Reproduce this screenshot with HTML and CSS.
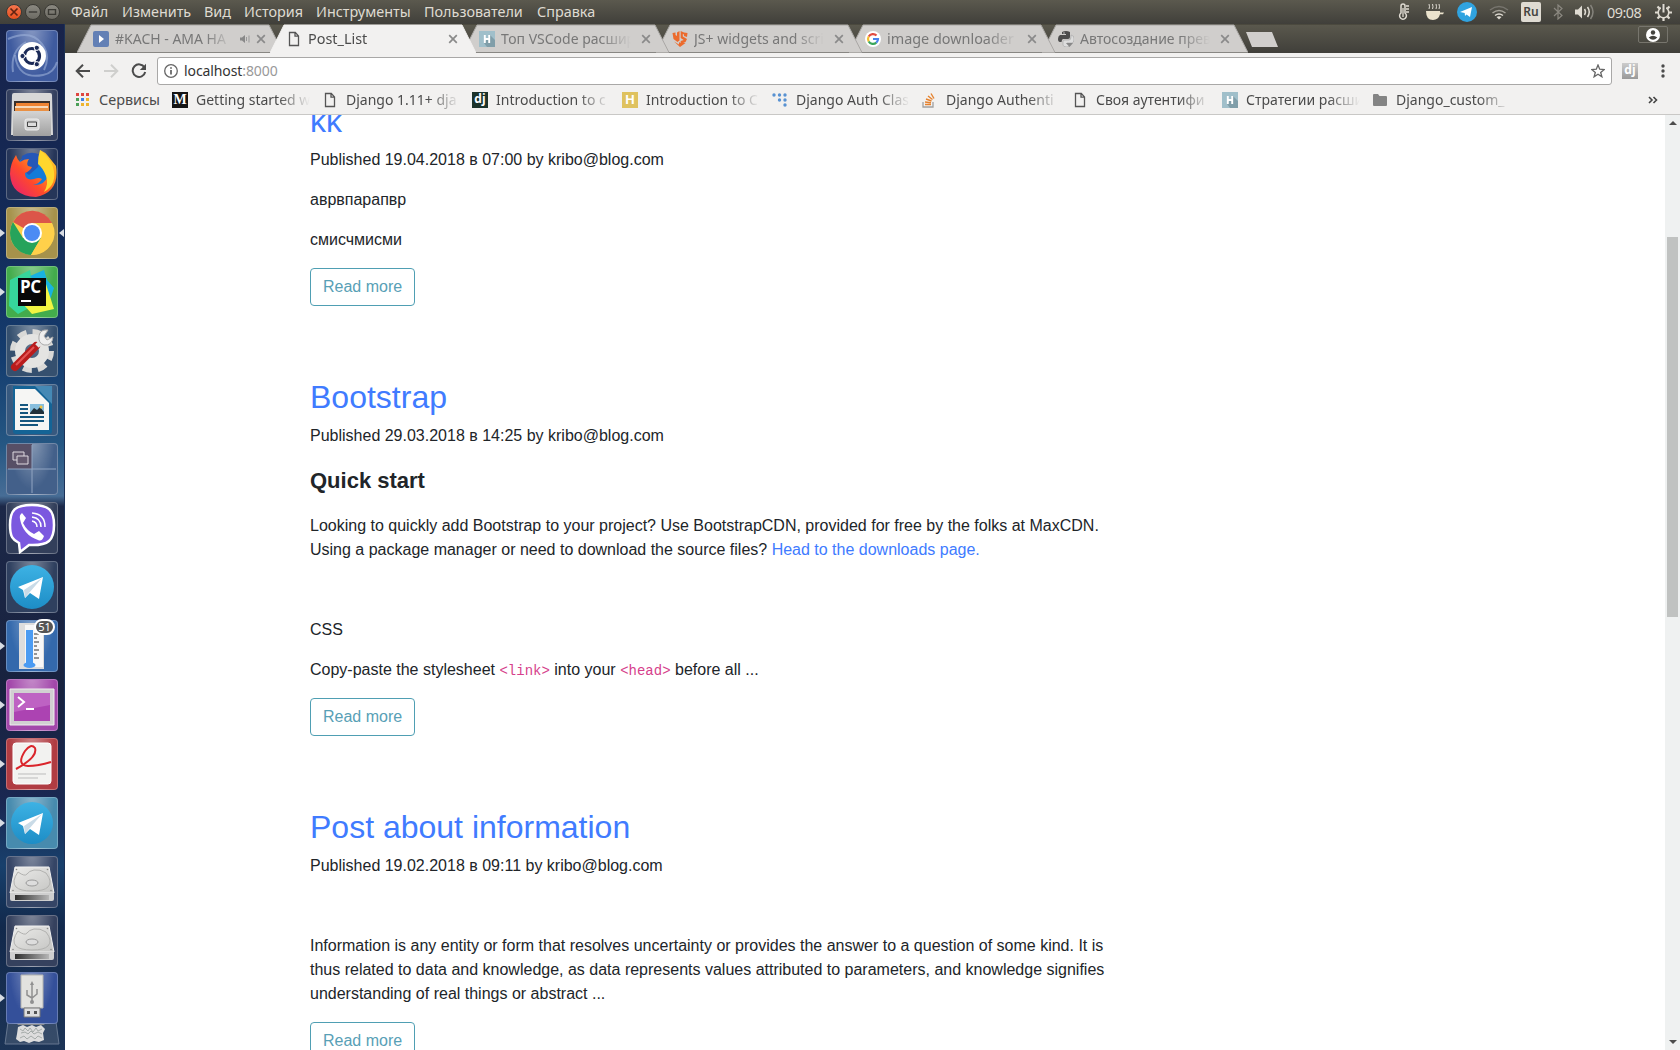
FILE: index.html
```html
<!DOCTYPE html>
<html lang="ru">
<head>
<meta charset="utf-8">
<title>Post_List</title>
<link rel="stylesheet" href="styles.css">
</head>
<body>
<svg class="defs" width="0" height="0">
  <defs>
    <linearGradient id="metal" x1="0" y1="0" x2="0" y2="1"><stop offset="0" stop-color="#d4d4d4"/><stop offset="1" stop-color="#a0a0a0"/></linearGradient>
    <linearGradient id="slab" x1="0" y1="0" x2="1" y2="1"><stop offset="0" stop-color="#ededeb"/><stop offset="1" stop-color="#c4c4c2"/></linearGradient>
    <linearGradient id="slot" x1="0" y1="0" x2="1" y2="0"><stop offset="0" stop-color="#2e2e2e"/><stop offset="1" stop-color="#b5b5b5"/></linearGradient>
    <linearGradient id="tgBlue" x1="0" y1="0" x2="0" y2="1"><stop offset="0" stop-color="#3db2e4"/><stop offset="1" stop-color="#1d8dc6"/></linearGradient>
    <linearGradient id="fox" x1="0" y1="1" x2="1" y2="0"><stop offset="0" stop-color="#e3197c"/><stop offset=".4" stop-color="#ff4a2b"/><stop offset=".7" stop-color="#ff9a1e"/><stop offset="1" stop-color="#ffee3a"/></linearGradient>
    <symbol id="page" viewBox="0 0 16 16"><path d="M3.500 1.500h5.800l3.200 3.400v9.600h-9zM9 1.500v3.700h3.500" fill="none" stroke="#555" stroke-width="1.300"/></symbol>
    <symbol id="habr" viewBox="0 0 16 16"><path d="M0 0h16v16H0z" fill="#a0bfca"/><path d="M11 4l5 5v7H8l-3-4z" fill="#809ea9"/><path d="M5.800 4v8M10.200 4v8M5.800 8h4.400" stroke="#fff" stroke-width="1.900"/></symbol>
    <symbol id="close" viewBox="0 0 10 10"><path d="M1.200 1.200l7.600 7.600M8.800 1.200L1.200 8.800" stroke="#8a8a8a" stroke-width="1.700"/></symbol>
    <symbol id="disk" viewBox="0 0 52 52"><path d="M9 11h34l5 26H4z" fill="url(#slab)" stroke="#f1f1f1"/><path d="M4 37h44v6q0 2-2 2H6q-2 0-2-2z" fill="#cfcfcf"/><path d="M9 39h34v5H9z" fill="url(#slot)"/><path d="M12 16q-7 10-2 15 4 4 16 4t16-4q5-5-2-14-6-4-12-3-5 1-7 4t-9-2z" fill="none" stroke="#b2b2b0"/><ellipse cx="26" cy="27" rx="6" ry="3" fill="#ddd" stroke="#999"/><g fill="#8a8a88"><circle cx="10.500" cy="13.500" r=".8"/><circle cx="41.500" cy="13.500" r=".8"/><circle cx="7" cy="34.500" r=".8"/><circle cx="45" cy="34.500" r=".8"/></g></symbol>
  </defs>
</svg>

<header class="panel">
  <div class="window-buttons"><i class="wb close-wb"><svg viewBox="0 0 10 10"><path d="M2.500 2.500l5 5M7.500 2.500l-5 5" stroke="#612312" stroke-width="1.200"/></svg></i><i class="wb"><svg viewBox="0 0 10 10"><path d="M2 5h6" stroke="#3b3a35"/></svg></i><i class="wb"><svg viewBox="0 0 10 10"><path d="M2.500 3.300h5v3.400h-5z" fill="none" stroke="#3b3a35"/></svg></i></div>
  <nav class="menu"><span style="width:51px">Файл</span><span style="width:82px">Изменить</span><span style="width:40px">Вид</span><span style="width:72px">История</span><span style="width:108px">Инструменты</span><span style="width:113px">Пользователи</span><span>Справка</span></nav>
  <div class="indicators">
    <svg width="12" height="18" viewBox="0 0 12 18"><path d="M3 3q0-2 2-2t2 2v7a3.400 3.400 0 1 1-4 0z" fill="none" stroke="#dfdbd2" stroke-width="1.500"/><path d="M5 5v9M8 3h3M8 6h3M8 9h3" stroke="#dfdbd2" stroke-width="1.300"/></svg>
    <svg class="cup" width="18" height="18" viewBox="0 0 18 18"><path d="M0 8h14v1.500h4l-1 1.800h-3Q12.500 17 7 17 0 17 0 8z" fill="#ebe3cd"/><path d="M3 6q1-2 0-5M6.500 6q1-2 0-5M10 6q1-2 0-5M13 6q1-2 0-5" fill="none" stroke="#dfdbd2"/></svg>
    <svg width="20" height="20" viewBox="0 0 20 20"><circle cx="10" cy="10" r="10" fill="#30a3e0"/><path d="M3 10l12-5-2 10-3.500-2.500L8 14l-.3-3z" fill="#fff"/></svg>
    <svg width="20" height="16" viewBox="0 0 20 16"><g fill="none" stroke-width="1.500"><path d="M1 6q9-7 18 0" stroke="#77756e"/><path d="M3.500 9q6.500-5 13 0" stroke="#a5a299"/><path d="M6 11.500q4-3 8 0" stroke="#dfdbd2"/></g><path d="M7.500 13q2.500-1.500 5 0L10 15.500z" fill="#dfdbd2"/></svg>
    <b class="layout">Ru</b>
    <svg width="10" height="16" viewBox="0 0 10 16"><path d="M1 4l8 7.500L5 15V1l4 3.500L1 12" fill="none" stroke="#8b8880" stroke-width="1.200"/></svg>
    <svg width="20" height="16" viewBox="0 0 20 16"><path d="M0 5.500h3l4-4v13l-4-4H0z" fill="#dfdbd2"/><g fill="none" stroke="#dfdbd2" stroke-width="1.500"><path d="M9.500 5q2 3 0 6"/><path d="M12.500 3q3.500 5 0 10"/><path d="M15.500 1q5 7 0 14" stroke="#85837c"/></g></svg>
    <span class="clock">09:08</span>
    <svg width="17" height="17" viewBox="0 0 17 17"><circle cx="8.500" cy="8.500" r="5.300" fill="none" stroke="#dfdbd2" stroke-width="1.600"/><path d="M14 8.500h3M0 8.500h3M8.500 14v3M12.400 12.400l2.100 2.100M2.500 14.500l2.100-2.100M2.500 2.500l2.100 2.100M14.500 2.500l-2.100 2.100" stroke="#dfdbd2" stroke-width="2.200"/><path d="M8.500 0v8" stroke="#4b4a44" stroke-width="5"/><path d="M8.500 0v8.500" stroke="#dfdbd2" stroke-width="2"/></svg>
  </div>
</header>

<div class="desktop">
<aside class="launcher">
  <div class="tile" style="--c:#3f5b9f"><svg viewBox="0 0 52 52"><g fill="none" stroke="#9db0d8" stroke-opacity=".6" stroke-width="2"><path d="M2 9q23-10 34 5 9 12 2 26"/><path d="M7 42Q4 21 20 12"/><path d="M9 25q3 25 28 20 11-2 14-13"/></g><circle cx="26" cy="26" r="14" fill="#fff"/><circle cx="26" cy="26" r="7.500" fill="none" stroke="#1b2a57" stroke-width="3.200" stroke-dasharray="13.700 2" stroke-dashoffset="7"/><g fill="#1b2a57" stroke="#fff"><circle cx="16.500" cy="26" r="2.600"/><circle cx="30.800" cy="17.800" r="2.600"/><circle cx="30.800" cy="34.200" r="2.600"/></g></svg></div>
  <div class="tile" style="--c:#34405f"><svg viewBox="0 0 52 52"><path d="M6 6q0-2 2-2h36q2 0 2 2l1 40H5z" fill="#d8d8d8"/><path d="M8 12h36v12H8z" fill="#3b302b"/><path d="M10 14h33v8H10z" fill="#ef8333"/><path d="M9 17h33v5H9z" fill="#f7d9bb"/><path d="M9 19h34v4H9z" fill="#e99044"/><path d="M7 22h38v25H7z" fill="url(#metal)"/><rect x="19" y="30" width="14" height="11" rx="2" fill="#d6d6d6" stroke="#eee"/><path d="M21.500 33h9v4.500h-9z" fill="#ddd" stroke="#444"/></svg></div>
  <div class="tile" style="--c:#263659"><svg viewBox="0 0 52 52"><circle cx="27" cy="25" r="18" fill="#137bd8"/><path d="M16 8q9-6 18-1l-2 12-9 8-9-7z" fill="#2557b8"/><path d="M10 7q1 4 4 7 4-3 9-3-3 4-1 7l4 1q-2 4-7 6 0 8 9 6 5-2 8 0-3 5-9 6 11 1 15-9 2-10-6-18 0-5-2-8 5 2 8 6l8 10q4 26-20 31Q5 48 4 26 4 16 10 7z" fill="url(#fox)"/><path d="M34 2q10 8 13 17 5 17-9 25 5-8 2-16-3-8-8-12 0-8 2-14z" fill="#ffd72d"/></svg></div>
  <div class="tile run focus" style="--c:#a6924b"><svg viewBox="0 0 52 52"><circle cx="26" cy="26" r="22" fill="#ffd04a"/><path d="M26 26L7 15A22 22 0 0 1 46 16z" fill="#dc5549"/><path d="M7 15a22 22 0 0 0 18 33l10-17-18 0z" fill="#26a35b"/><path d="M26 16h20a22 22 0 0 1-21 32l10-17z" fill="#ffd04a"/><circle cx="26" cy="26" r="10" fill="#fff"/><circle cx="26" cy="26" r="8" fill="#4b8bf4"/></svg></div>
  <div class="tile run" style="--c:#43ac4c"><svg viewBox="0 0 52 52"><path d="M4 14L24 4l6 34-18 10-9-8z" fill="#36d69b"/><path d="M24 10l14-6 3 10 7 8-4 12z" fill="#18b2e0"/><path d="M39 15l9 28-22 5-9-10z" fill="#f2f442"/><path d="M12 12h28v28H12z" fill="#080808"/><text class="pc" x="14" y="27">PC</text><path d="M15 35h10" stroke="#fff" stroke-width="2"/></svg></div>
  <div class="tile" style="--c:#35506f"><svg viewBox="0 0 52 52"><circle cx="26" cy="26" r="19" fill="none" stroke="#d9d9d7" stroke-width="6" stroke-dasharray="8.900 6.020"/><circle cx="26" cy="26" r="12" fill="none" stroke="#e4e4e2" stroke-width="10"/><path d="M9 42l21-21" stroke="#b91c1c" stroke-width="8" stroke-linecap="round"/><path d="M10 40l18-18" stroke="#e35353" stroke-width="2"/><path d="M31 21l8-8" stroke="#e4e4e4" stroke-width="5"/><path d="M42 5q-8-1-9 6t5 9q8 1 9-8l-6 3-3-4z" fill="#eee" stroke="#aaa"/></svg></div>
  <div class="tile" style="--c:#37597f"><svg viewBox="0 0 52 52"><path d="M7 2h39v45q0 3-3 3H10q-3 0-3-3z" fill="#146496"/><path d="M29 2h17v18z" fill="#4589b5"/><path d="M9 5h20l14 14v27H9z" fill="#f6f6f4"/><path d="M14 21h8M14 25h8M14 29h8M14 33h24M14 37h24M14 41h18" stroke="#15577f" stroke-width="2"/><path d="M24 20h14v10H24z" fill="#87bedd"/><path d="M24 29l4-5 3 2 3-3 4 5v2H24z" fill="#20313b"/><circle cx="35" cy="23" r="1.500" fill="#f2c13c"/></svg></div>
  <div class="tile" style="--c:#43608a"><svg viewBox="0 0 52 52"><path d="M1 1h25v25H1z" fill="#574f66"/><path d="M26 2v48M2 26h48" stroke="#91a5c2"/><g fill="#64596e" stroke="#ded9df"><path d="M7 9h11v8H7z"/><path d="M11 13h11v8H11z"/></g></svg></div>
  <div class="tile" style="--c:#333f5b"><svg viewBox="0 0 52 52"><path d="M26 3C9 3 4 8 4 23c0 12 3 15 9 18l1 9 9-7c20 1 25-5 25-20C48 8 43 3 26 3z" fill="#7b58df" stroke="#fff" stroke-width="2.500"/><path d="M16 11l4 5-3 5q4 8 11 11l5-3 5 5q-2 6-6 4-15-5-18-21-1-4 2-6z" fill="#fff"/><path d="M26 19q5 1 5 6M26 15q9 1 9 10M26 11q13 1 13 14" fill="none" stroke="#fff" stroke-width="1.500"/></svg></div>
  <div class="tile" style="--c:#2f405f"><svg viewBox="0 0 52 52"><circle cx="26" cy="26" r="22" fill="url(#tgBlue)"/><path d="M12 26l25-10-4 22-9-6-5 5-2-8z" fill="#fff"/><path d="M18 29l18-12-13 15-4 5z" fill="#c9dbe7"/></svg></div>
  <div class="tile run" style="--c:#3469ac"><svg viewBox="0 0 52 52"><path d="M13 3h25v46H13z" fill="#ddd"/><path d="M19 5h18v42H19z" fill="#f7f7f7"/><path d="M20 10h7v34h-7z" fill="#4b9bf2"/><ellipse cx="23.500" cy="45" rx="6" ry="3" fill="#4b9bf2"/><path d="M28 14h5M28 18h3M28 22h5M28 26h3M28 30h5M28 34h3M28 38h5" stroke="#333"/></svg><span class="count">51</span></div>
  <div class="tile run" style="--c:#a247aa"><svg viewBox="0 0 52 52"><path d="M4 10h44v36H4z" fill="#d1cfd1" stroke="#eee"/><path d="M8 14h36v28H8z" fill="#ac43b2"/><path d="M8 14h36v12L8 33z" fill="#be62c3"/><path d="M12 18l6 5-6 5M20 30h8" fill="none" stroke="#fff" stroke-width="2"/></svg></div>
  <div class="tile run" style="--c:#b03c42"><svg viewBox="0 0 52 52"><rect x="7" y="5" width="38" height="41" rx="3" fill="#f2f2f0" stroke="#fff"/><path d="M10 31Q32 19 29 10q-4-5-10 3-9 14 3 15 10 0 23-4" fill="none" stroke="#da252b" stroke-width="2"/><path d="M12 36h28M12 40h20" stroke="#bbb"/></svg></div>
  <div class="tile run" style="--c:#478bae"><svg viewBox="0 0 52 52"><circle cx="26" cy="26" r="21" fill="url(#tgBlue)"/><path d="M12 26l25-10-4 22-9-6-5 5-2-8z" fill="#fff"/><path d="M18 29l18-12-13 15-4 5z" fill="#c9dbe7"/></svg></div>
  <div class="tile" style="--c:#354566"><svg viewBox="0 0 52 52"><use href="#disk"/></svg></div>
  <div class="tile" style="--c:#35415e"><svg viewBox="0 0 52 52"><use href="#disk"/></svg></div>
  <div class="tile run usb" style="--c:#34509a"><svg viewBox="0 0 52 52"><path d="M15 3h22v33H15z" fill="#e2e2df" stroke="#b4b4b0"/><path d="M18 36h16v9H18z" fill="#dedede" stroke="#777"/><path d="M21 39h3v3h-3zM28 39h3v3h-3z" fill="#555"/><path d="M26 12v18M21 18v5l5 3 5-4v-5" fill="none" stroke="#909090" stroke-width="1.500"/><circle cx="26" cy="30" r="2" fill="#909090"/><path d="M24 13l2-4 2 4z" fill="#909090"/></svg></div>
  <div class="trash"><svg viewBox="0 0 56 26"><path d="M4 2h48l3 22H1z" fill="#4c5f79" fill-opacity=".55" stroke="#667790"/><path d="M11 1h32l-3 4H14z" fill="#898b8c"/><path d="M14 7l5-2 4 2 5-2 4 2 5-2 4 4-2 4 1 7-5 2-5-1-5 2-5-2-4 1-4-3 1-5z" fill="#ddd"/><path d="M16 9l3 2 2-3 3 3 2-3 3 4 3-4 2 3 4-2M17 13l4-1 3 2 3-3 3 3 4-2 4 2M16 18l4-2 3 3 4-3 4 3 3-3 4 2" fill="none" stroke="#a5aba9"/></svg></div>
</aside>

<main class="browser">
  <div class="tabs">
    <div class="tab"><svg class="shape" viewBox="0 0 206 29"><path d="M0 28.500L14 1h178l14 27.500"/></svg><svg class="icon" viewBox="0 0 16 16"><rect width="16" height="16" rx="2" fill="#6380b5"/><path d="M6 4l5 4-5 4z" fill="#fff"/></svg><span class="title">#KACH - AMA HA</span><svg class="sound" viewBox="0 0 10 10"><path d="M0 3.500h2L5 1v8L2 6.500H0z" fill="#888"/><path d="M6.500 3v4M9 1.500v7" stroke="#999"/></svg><svg class="x"><use href="#close"/></svg></div>
    <div class="tab active"><svg class="shape" viewBox="0 0 206 29"><path d="M0 29L14 1h178l14 28"/></svg><svg class="icon"><use href="#page"/></svg><span class="title">Post_List</span><svg class="x"><use href="#close"/></svg></div>
    <div class="tab"><svg class="shape" viewBox="0 0 206 29"><path d="M0 28.500L14 1h178l14 27.500"/></svg><svg class="icon"><use href="#habr"/></svg><span class="title">Топ VSCode расшир</span><svg class="x"><use href="#close"/></svg></div>
    <div class="tab"><svg class="shape" viewBox="0 0 206 29"><path d="M0 28.500L14 1h178l14 27.500"/></svg><svg class="icon" viewBox="0 0 16 16"><path d="M.5 2L3.500 1.500V4L5 5V1.500L7.500 0v9.500L5.500 11 1.500 8z" fill="#ec6b2d"/><path d="M8.700 0L12 1.500 15.500 2 15 6l-3-1V3.500L10.800 3v2.500L15 8l-1.500 3-4.800 2V10l3-1-3-2z" fill="#ec6b2d"/><path d="M2 10.500l5 3V11l1 .8 5.500.2L8 16z" fill="#ec6b2d"/></svg><span class="title">JS+ widgets and scri</span><svg class="x"><use href="#close"/></svg></div>
    <div class="tab"><svg class="shape" viewBox="0 0 206 29"><path d="M0 28.500L14 1h178l14 27.500"/></svg><svg class="icon" viewBox="0 0 16 16"><circle cx="8" cy="8" r="8" fill="#fff"/><g fill="none" stroke-width="2.200"><path d="M11.500 4.500A5 5 0 0 0 3.700 5.500" stroke="#e24b40"/><path d="M3.700 5.500a5 5 0 0 0 0 5" stroke="#f4bd2b"/><path d="M3.700 10.500a5 5 0 0 0 7.600 1.200" stroke="#3aa75b"/><path d="M11.300 11.700Q13 10 13 8H8" stroke="#4a83ec"/></g></svg><span class="title wide">image downloader</span><svg class="x"><use href="#close"/></svg></div>
    <div class="tab"><svg class="shape" viewBox="0 0 206 29"><path d="M0 28.500L14 1h178l14 27.500"/></svg><svg class="icon" viewBox="0 0 16 16"><path d="M4 1q4-2 8 0v5q0 2-2 2H5q-1 0-1.500 3H2Q0 11 0 8t2-4h6V3H4z" fill="#4c4c4c"/><circle cx="6" cy="2" r=".7" fill="#ddd"/><path d="M13 4q3 0 3 4t-2 4H9v1h4q-1 3-4 3-4 0-4-2v-4q0-1 2-1h4q2 0 2-3z" fill="#ddd" stroke="#aaa" stroke-width=".7"/><path d="M8 12h7l-3.500 4z" fill="#888"/></svg><span class="title">Автосоздание прев</span><svg class="x"><use href="#close"/></svg></div>
    <div class="new-tab"></div>
    <div class="profile"><svg width="14" height="14" viewBox="0 0 14 14"><circle cx="7" cy="7" r="7" fill="#fff"/><circle cx="7" cy="4.500" r="2.200" fill="#44433e"/><path d="M2.700 9.500q4.300-3.500 8.600 0Q7 14 2.700 9.500z" fill="#44433e"/></svg></div>
  </div>

  <div class="toolbar">
    <svg class="nav-icon" viewBox="0 0 16 16"><path d="M15 8H2M8 1.700L1.700 8 8 14.300" fill="none" stroke="#4b4b4b" stroke-width="2"/></svg>
    <svg class="nav-icon" viewBox="0 0 16 16"><path d="M1 8h13M8 1.700L14.300 8 8 14.300" fill="none" stroke="#cfcfcd" stroke-width="2"/></svg>
    <svg class="nav-icon" viewBox="0 0 16 16"><path d="M13.500 4.500A6.300 6.300 0 1 0 14.200 9" fill="none" stroke="#4b4b4b" stroke-width="2"/><path d="M15 .8V7H8.800z" fill="#4b4b4b"/></svg>
    <div class="omnibox"><svg width="14" height="14" viewBox="0 0 14 14"><circle cx="7" cy="7" r="6.300" fill="none" stroke="#666" stroke-width="1.300"/><path d="M7 6v4.500M7 3.200v1.600" stroke="#555" stroke-width="1.600"/></svg><span class="url">localhost<em>:8000</em></span><svg class="star" width="14" height="14" viewBox="0 0 14 14"><path d="M7 1l1.700 4.200 4.500.3-3.500 2.900 1.200 4.400L7 10.300l-3.900 2.500 1.200-4.400L.8 5.500l4.500-.3z" fill="none" stroke="#666" stroke-width="1.300"/></svg></div>
    <b class="dj ext">dj</b>
    <svg class="dots" width="4" height="14" viewBox="0 0 4 14"><g fill="#4b4b4b"><circle cx="2" cy="2" r="1.700"/><circle cx="2" cy="7" r="1.700"/><circle cx="2" cy="12" r="1.700"/></g></svg>
  </div>

  <div class="bookmarks">
    <div class="bm apps"><svg viewBox="0 0 16 16"><g fill="#df4740"><path d="M1 1h3v3H1zM6 1h3v3H6zM11 1h3v3h-3z"/></g><path d="M1 6h3v3H1zM1 11h3v3H1z" fill="#4c9f57"/><path d="M6 6h3v3H6z" fill="#3f80e4"/><path d="M11 6h3v3h-3zM6 11h3v3H6zM11 11h3v3h-3z" fill="#eeb42e"/></svg><span>Сервисы</span></div>
    <div class="bm"><b class="medium">M</b><span>Getting started w</span></div>
    <div class="bm"><svg><use href="#page"/></svg><span>Django 1.11+ dja</span></div>
    <div class="bm"><b class="dj">dj</b><span>Introduction to c</span></div>
    <div class="bm"><b class="hh">H</b><span>Introduction to C</span></div>
    <div class="bm"><svg viewBox="0 0 16 16"><g fill="#5892d2"><circle cx="2" cy="3" r="1.700"/><circle cx="7.500" cy="3" r="1.700"/><circle cx="13" cy="3" r="1.700"/><circle cx="7.500" cy="8" r="1.700"/><circle cx="13" cy="8" r="1.700"/><circle cx="13" cy="13" r="1.700"/></g></svg><span>Django Auth Clas</span></div>
    <div class="bm"><svg viewBox="0 0 16 16"><path d="M1 10v5h10v-5" fill="none" stroke="#a0a0a0" stroke-width="1.300"/><path d="M3 12.500h6M3 10l6 .8M4 7l5.500 2M6 4l4.500 3.500M9 1.500l3 5" stroke="#e5822f" stroke-width="1.400"/></svg><span>Django Authenti</span></div>
    <div class="bm"><svg><use href="#page"/></svg><span>Своя аутентифи</span></div>
    <div class="bm"><svg><use href="#habr"/></svg><span>Стратегии расши</span></div>
    <div class="bm"><svg viewBox="0 0 16 16"><path d="M1 3q0-1 1-1h4l1.500 2H14q1 0 1 1v8q0 1-1 1H2q-1 0-1-1z" fill="#848484"/></svg><span>Django_custom_</span></div>
    <svg class="more" width="10" height="8" viewBox="0 0 10 8"><path d="M1 1l3 3-3 3M5.500 1l3 3-3 3" fill="none" stroke="#444" stroke-width="1.600"/></svg>
  </div>

  <div class="viewport">
    <div class="posts">
      <article>
        <h2>kk</h2>
        <p>Published 19.04.2018 в 07:00 by kribo@blog.com</p>
        <p>аврвпарапвр</p>
        <p>смисчмисми</p>
        <a class="btn">Read more</a>
      </article>
      <article>
        <h2>Bootstrap</h2>
        <p>Published 29.03.2018 в 14:25 by kribo@blog.com</p>
        <p class="lead">Quick start</p>
        <p>Looking to quickly add Bootstrap to your project? Use BootstrapCDN, provided for free by the folks at MaxCDN. Using a package manager or need to download the source files? <a>Head to the downloads page.</a></p>
        <p>&nbsp;</p>
        <p>CSS</p>
        <p>Copy-paste the stylesheet <code>&lt;link&gt;</code> into your <code>&lt;head&gt;</code> before all ...</p>
        <a class="btn">Read more</a>
      </article>
      <article>
        <h2>Post about information</h2>
        <p>Published 19.02.2018 в 09:11 by kribo@blog.com</p>
        <p>&nbsp;</p>
        <p>Information is any entity or form that resolves uncertainty or provides the answer to a question of some kind. It is thus related to data and knowledge, as data represents values attributed to parameters, and knowledge signifies understanding of real things or abstract ...</p>
        <a class="btn">Read more</a>
      </article>
    </div>
    <div class="scrollbar"><i class="up"></i><i class="thumb"></i><i class="down"></i></div>
  </div>
</main>
</div>
</body>
</html>
```
FILE: styles.css
```css
* { box-sizing: border-box; }
body {
  margin: 0;
  width: 1680px;
  height: 1050px;
  overflow: hidden;
  display: flex;
  flex-direction: column;
  background: #fff;
  font-family: "Noto Sans", sans-serif;
  font-size: 14px;
}
svg { display: block; flex: none; }
.defs { position: absolute; }

/* Top panel */
.panel {
  height: 24px;
  flex: none;
  display: flex;
  align-items: center;
  background: linear-gradient(#5b594e, #403f3a);
  color: #dfdbd2;
}
.window-buttons { display: flex; gap: 3px; padding-left: 6px; width: 71px; }
.wb {
  width: 16px;
  height: 16px;
  border-radius: 50%;
  background: linear-gradient(#8b8981, #6c6a63);
  border: 1px solid #3b3a35;
}
.close-wb { background: linear-gradient(#f5764e, #e5501f); }
.menu { display: flex; line-height: 24px; white-space: nowrap; font-size: 14.4px; }
.indicators { margin-left: auto; display: flex; align-items: center; padding-right: 8px; gap: 12px; }
.indicators svg:first-child { margin-right: 4px; }
.indicators .cup { margin-right: 1px; }
.layout {
  width: 20px;
  height: 20px;
  border-radius: 2px;
  background: #dfdbd2;
  color: #454440;
  font-size: 12px;
  font-weight: 600;
  line-height: 20px;
  text-align: center;
}
.clock { width: 36px; white-space: nowrap; font-size: 14.4px; letter-spacing: -.5px; }

.desktop { display: flex; flex: 1; min-height: 0; }

/* Launcher */
.launcher {
  width: 65px;
  flex: none;
  padding: 6px 0 0 6px;
  display: flex;
  flex-direction: column;
  gap: 7px;
  overflow: hidden;
  background: linear-gradient(#18234a, #132a58 20%, #153e70 33%, #255783 41%, #476d96 46%, #1c2848 47%, #18223f 65%, #1a2852 76%, #18406c 82%, #12294c 88%, #1c3456);
  border-right: 1px solid #1b3157;
}
.tile {
  position: relative;
  width: 52px;
  height: 52px;
  flex: none;
  border-radius: 4px;
  border: 1px solid rgba(255, 255, 255, .25);
  background: radial-gradient(ellipse at 50% -10%, rgba(255, 255, 255, .38), rgba(255, 255, 255, 0) 65%), var(--c);
}
.tile svg { width: 52px; height: 52px; margin: -1px; }
.run::before, .focus::after {
  content: "";
  position: absolute;
  top: 21px;
  left: -7px;
  border: 4px solid transparent;
  border-left: 5px solid #d8dce3;
  border-right: 0;
}
.focus::after { left: auto; right: -7px; border-right: 5px solid #d8dce3; border-left: 0; }
.count {
  position: absolute;
  top: -2px;
  right: 2px;
  width: 21px;
  height: 16px;
  border: 2px solid #fff;
  border-radius: 8px;
  background: #555;
  color: #fff;
  font-size: 11px;
  line-height: 12px;
  text-align: center;
}
.pc { font: 700 17px "Open Sans", sans-serif; fill: #fff; letter-spacing: -.5px; }
.usb { margin-top: -2px; }
.trash { margin: -11px 0 0 -2px; width: 56px; height: 26px; }

/* Tab strip */
.browser { flex: 1; min-width: 0; display: flex; flex-direction: column; }
.tabs {
  height: 29px;
  flex: none;
  display: flex;
  padding-left: 12px;
  background: linear-gradient(#5a584d, #403f3a);
  border-top: 1px solid #4b493e;
}
.tab {
  position: relative;
  width: 206px;
  height: 29px;
  margin-top: -1px;
  margin-right: -13px;
  flex: none;
  display: flex;
  align-items: center;
  padding: 1px 0 0 16px;
  color: #777;
  z-index: 6;
}
.tab:nth-child(4) { z-index: 5; }
.tab:nth-child(5) { z-index: 4; }
.tab:nth-child(6) { z-index: 3; }
.tab.active { z-index: 9; color: #4b4b4b; font-size: 14.4px; }
.shape { position: absolute; left: 0; top: 0; width: 206px; height: 29px; z-index: -1; fill: #d0cecc; stroke: #a9a7a5; }
.active .shape { fill: #f2f1f0; stroke: #f2f1f0; }
.icon { width: 16px; height: 16px; }
.title { width: 130px; margin-left: 6px; overflow: hidden; white-space: nowrap; line-height: 24px; -webkit-mask-image: linear-gradient(90deg, #000 77%, transparent); mask-image: linear-gradient(90deg, #000 77%, transparent); }
.title.wide { font-size: 14.4px; }
.x { width: 10px; height: 10px; margin-left: 10px; }
.sound { width: 10px; height: 10px; margin-left: 8px; }
.tab:first-child .title { width: 117px; }
.tab:first-child .x { margin-left: 6px; }
.new-tab { width: 32px; height: 15px; margin: 7px 0 0 11px; background: #d0cecc; clip-path: polygon(0 0, 26px 0, 100% 100%, 6px 100%); }
.profile { width: 30px; height: 17px; margin: 1px 12px 0 auto; display: grid; place-items: center; border: 1px solid #77756d; border-radius: 2px; }

/* Toolbar */
.toolbar { height: 35px; flex: none; display: flex; align-items: center; padding: 1px 15px 0 10px; background: #f2f1f0; }
.nav-icon { width: 16px; height: 16px; margin-right: 12px; }
.omnibox {
  width: 1455px;
  height: 28px;
  margin-left: -2px;
  display: flex;
  align-items: center;
  padding: 0 6px 0 6px;
  background: #fff;
  border: 1px solid #a9a8a7;
  border-radius: 3px;
}
.url { margin-left: 6px; padding-bottom: 2px; color: #333; letter-spacing: -.1px; }
.url em { color: #999; font-style: normal; }
.star { margin-left: auto; }
.dj { width: 16px; height: 16px; background: #1c332b; color: #fff; font: 700 12px/14px "Open Sans", sans-serif; text-align: center; }
.ext { margin-left: 10px; background: linear-gradient(#ccc, #999); }
.dots { margin-left: auto; }

/* Bookmarks */
.bookmarks { height: 27px; flex: none; display: flex; align-items: center; padding: 0 22px 2px 10px; background: #f2f1f0; border-bottom: 1px solid #c9c8c6; color: #4b4b4b; }
.bm { width: 150px; flex: none; display: flex; align-items: center; gap: 8px; }
.bm svg, .bm b { width: 16px; height: 16px; flex: none; }
.bm span { width: 114px; overflow: hidden; white-space: nowrap; line-height: 24px; -webkit-mask-image: linear-gradient(90deg, #000 72%, transparent); mask-image: linear-gradient(90deg, #000 72%, transparent); }
.bm.apps { width: 97px; }
.bm.apps span { width: auto; font-size: 14.4px; -webkit-mask: none; mask: none; }
.medium { background: #151515; color: #fff; font: 700 14px/16px "Liberation Serif", serif; text-align: center; }
.hh { background: #dfc25f; color: #fff; font: 700 13px/16px "Liberation Sans", sans-serif; text-align: center; }
.more { margin-left: auto; }

/* Page */
.viewport { flex: 1; min-height: 0; display: flex; overflow: hidden; background: #fff; }
.posts { width: 1600px; padding-left: 245px; margin-top: -13.5px; color: #212529; font: 16px/1.5 "Liberation Sans", Arial, sans-serif; }
.posts article { width: 825px; margin-bottom: 72px; }
.posts h2 { margin: 0 0 8px; font-size: 32px; line-height: 1.2; font-weight: 400; color: #407bff; }
.posts p { margin: 0 0 16px; }
.posts p a { color: #407bff; }
.posts .lead { font-size: 22px; line-height: 33.6px; font-weight: 700; }
.posts code { font: 14px "Liberation Mono", monospace; color: #d63f8c; }
.btn { display: block; width: 105px; height: 38px; padding: 6px 12px; border: 1px solid #4f9fb3; border-radius: 4px; color: #58a0b6; white-space: nowrap; }
.scrollbar { position: relative; width: 15px; background: #eff1f1; display: flex; flex-direction: column; align-items: center; }
.up, .down { border: 4px solid transparent; border-top: 0; border-bottom: 4px solid #4d4d4d; margin-top: 6px; }
.thumb { width: 11px; height: 380px; margin-top: 112px; background: #c0c2c1; }
.down { margin: auto 0 6px; border-bottom: 0; border-top: 4px solid #4d4d4d; }
```
